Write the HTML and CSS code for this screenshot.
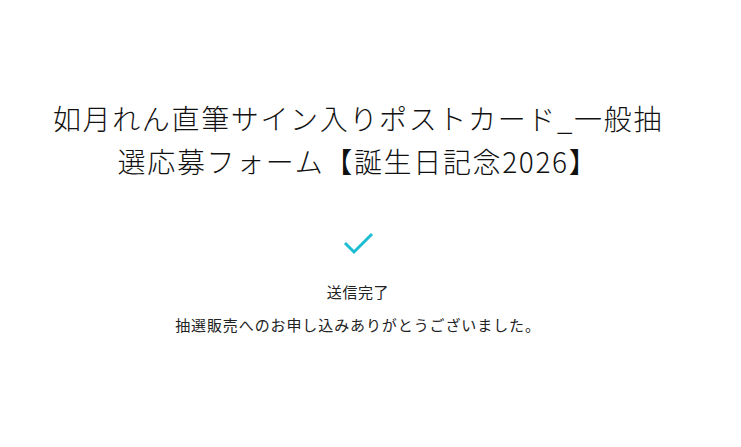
FILE: index.html
```html
<!DOCTYPE html>
<html lang="ja">
<head>
<meta charset="utf-8">
<link rel="stylesheet" href="styles.css">
</head>
<body>
<main class="page">
  <h1 class="title">如月れん直筆サイン入りポストカード_一般抽選応募フォーム【誕生日記念2026】</h1>
  <div class="done">
    <svg class="check" width="32" height="24" viewBox="0 0 32 24"><path d="M3 12 L12 21 L30 3" fill="none" stroke="#1cbcd3" stroke-width="3"/></svg>
    <p class="status">送信完了</p>
    <p class="message">抽選販売へのお申し込みありがとうございました。</p>
  </div>
</main>
</body>
</html>
```
FILE: styles.css
```css
html, body { margin: 0; padding: 0; background: #fff; }
body { font-family: "Noto Sans CJK JP", "Noto Sans", sans-serif; color: #222; }
.page { width: 716px; display: flex; flex-direction: column; align-items: center; padding-top: 97px; }
.title { width: 620px; margin: 0; font-size: 28px; font-weight: 300; line-height: 43px; letter-spacing: 1.65px; text-align: center; color: #111; }
.done { display: flex; flex-direction: column; align-items: center; margin-top: 48px; }
.check { display: block; }
.status { margin: 26px 0 0; font-size: 15px; letter-spacing: 0.6px; line-height: 22px; font-weight: 400; }
.message { margin: 11px 0 0; font-size: 15px; letter-spacing: 0.9px; line-height: 22px; font-weight: 400; }
```
